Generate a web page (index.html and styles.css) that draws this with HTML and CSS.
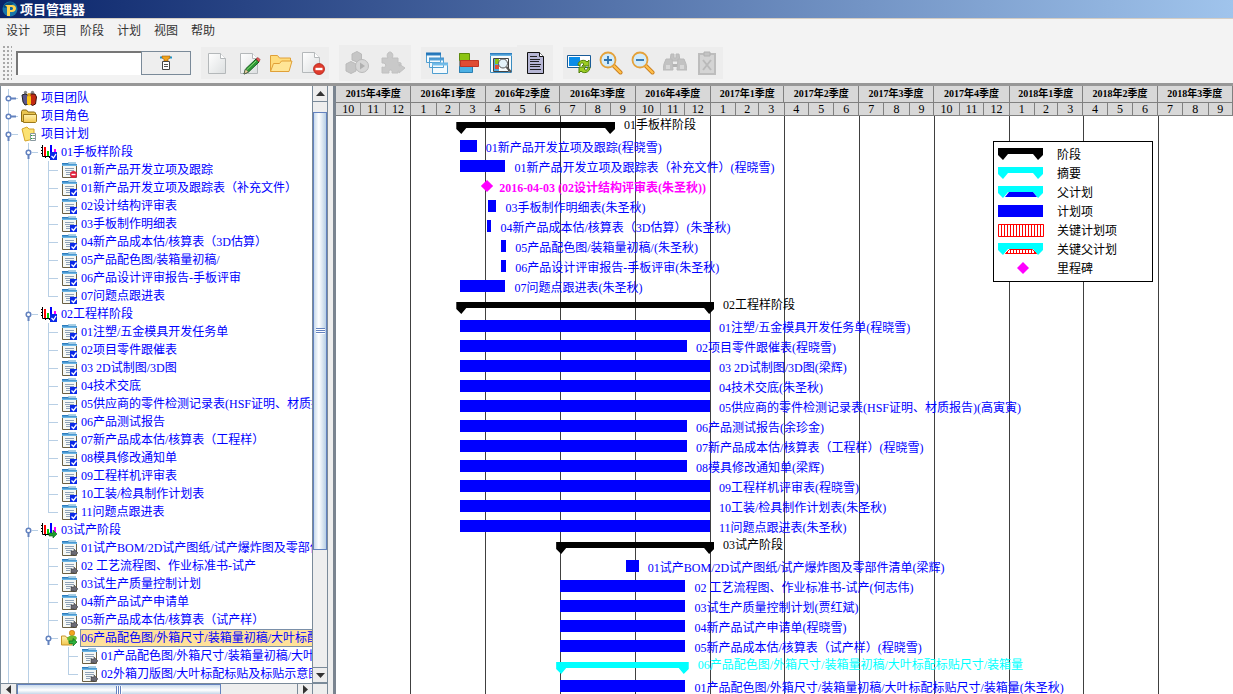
FILE: index.html
```html
<!DOCTYPE html>
<html lang="zh-CN">
<head>
<meta charset="utf-8">
<title>项目管理器</title>
<link rel="stylesheet" href="styles.css">
</head>
<body>
<svg class="defs" aria-hidden="true">
  <defs>
    <linearGradient id="pageFill" x1="0" y1="0" x2="1" y2="1"><stop offset="0" stop-color="#fff"/><stop offset="1" stop-color="#dcdfe0"/></linearGradient>
    <linearGradient id="folderFill" x1="0" y1="0" x2="0" y2="1"><stop offset="0" stop-color="#fff3b0"/><stop offset="1" stop-color="#f2c64e"/></linearGradient>
    <linearGradient id="blueFill" x1="0" y1="0" x2="0" y2="1"><stop offset="0" stop-color="#1c6fb5"/><stop offset="1" stop-color="#7cc4ee"/></linearGradient>
    <pattern id="stripes" width="3" height="12" patternUnits="userSpaceOnUse"><rect width="3" height="12" fill="#fff"/><rect width="1" height="12" fill="#f00"/></pattern>
  </defs>
  <symbol id="closed" viewBox="0 0 20 18"><path d="M11 9.500h5" stroke="#6382bf" stroke-width="2"/><path d="M16 9.500h2" stroke="#b8cfe5"/><circle cx="8.500" cy="9.500" r="2.300" fill="#fff" stroke="#6382bf" stroke-width="1.500"/></symbol>
  <symbol id="opened" viewBox="0 0 20 18"><path d="M12 9.500h6" stroke="#b8cfe5"/><path d="M8.500 12v4" stroke="#6382bf" stroke-width="2"/><circle cx="8.500" cy="9.500" r="2.300" fill="#fff" stroke="#6382bf" stroke-width="1.500"/></symbol>
  <symbol id="doc" viewBox="0 0 16 16"><path d="M.5 2.500h14v13H.5z" fill="#f6f8f4" stroke="#6a5f42"/><path d="M0 1h6l1 1h8v2H0z" fill="url(#blueFill)"/><path d="M6 1h8" stroke="#4d9ccb"/><path d="M3 6.500h9M3 8.500h9M4 10.500h6M4 12.500h4" stroke="#8fa3b8"/></symbol>
  <symbol id="doc-check" viewBox="0 0 16 16"><use href="#doc" width="16" height="16"/><path d="M8 9h7v7H8z" fill="#0a28e8"/><path d="M9.500 12.500l2 2 3-4" fill="none" stroke="#fff" stroke-width="1.300"/></symbol>
  <symbol id="doc-stop" viewBox="0 0 16 16"><use href="#doc" width="16" height="16"/><circle cx="11.500" cy="12.500" r="3.500" fill="#e0223c"/><path d="M9.500 12.500h4" stroke="#fff" stroke-width="1.400"/></symbol>
  <symbol id="doc-wait" viewBox="0 0 16 16"><use href="#doc" width="16" height="16"/><path d="M9 11h3V9l4 4-4 3v-1H9z" fill="#6a6a74" stroke="#333" stroke-width=".5"/></symbol>
  <symbol id="phase" viewBox="0 0 16 16"><path d="M1.500 1v11.500H13M0 3.500h1M0 6.500h1M0 9.500h1M4.500 12v2M8.500 12v2" fill="none" stroke="#000"/><path d="M3 3h2v9H3z" fill="#f00"/><path d="M6 7h2v5H6z" fill="#0c0"/><path d="M9 1h2v11H9z" fill="#00f"/><path d="M13 5h2v6h-2z" fill="#f0f"/></symbol>
  <symbol id="phase-done" viewBox="0 0 16 16"><use href="#phase" width="16" height="16"/><path d="M9 8h7v8H9z" fill="#0a28e8"/><path d="M10.500 12l2 2 2.500-4" fill="none" stroke="#fff" stroke-width="1.300"/></symbol>
  <symbol id="phase-run" viewBox="0 0 16 16"><use href="#phase" width="16" height="16"/><path d="M8 11h4V8l4 4-4 4v-2H8z" fill="#1a9c2c" stroke="#0b5c18" stroke-width=".6"/></symbol>
  <symbol id="team" viewBox="0 0 16 16"><circle cx="4.500" cy="2.500" r="1.700" fill="#888"/><circle cx="11.500" cy="2.500" r="1.700" fill="#888"/><path d="M1 5l3-1 3 1 1 3v6l-4 1-2-3z" fill="#5a5488" stroke="#222"/><path d="M9 4h5l1.500 3-1 7-3 1.500L8 13z" fill="#c22a12" stroke="#401008"/><path d="M6 7c0-2 4-2 4 0v7l-2 1.500L6 14z" fill="#ffc414"/><circle cx="8" cy="4.800" r="1.800" fill="#d8a020"/></symbol>
  <symbol id="folder" viewBox="0 0 16 16"><path d="M.5 13.500v-10l1-1.500h4l1.500 2h6.500l1 1v8.500z" fill="#e9c54f" stroke="#8c6d14"/><path d="M2.500 6.500h13v7l-1 1h-12z" fill="url(#folderFill)" stroke="#9c7a1c"/></symbol>
  <symbol id="plans" viewBox="0 0 16 16"><path d="M1 3l5-2 2 2h5v10l-9 2z" fill="#fbe272" stroke="#d5a52a"/><path d="M9.500 7.500h5v7h-5z" fill="#fff" stroke="#8899a0"/><path d="M10 9.500h1.500M10 12.500h1.500" stroke="#1a9c2c"/><path d="M12 9.500h2M12 12.500h2" stroke="#888"/></symbol>
  <symbol id="parent" viewBox="0 0 16 16"><path d="M.5 6h4l1 1.500H11V15H.5z" fill="url(#folderFill)" stroke="#c8952a"/><circle cx="11" cy="3" r="2.700" fill="#f2a41c" stroke="#b86a0c" stroke-width=".6"/><path d="M6 9c0-4 9-5 10-1l-2 4H8z" fill="#6dbb30"/><path d="M8 11h4V8.500l4 3.500-4 4v-2.500H8z" fill="#2fb13c" stroke="#0d6b1b" stroke-width=".7"/></symbol>
  <symbol id="page" viewBox="0 0 24 24"><path d="M3.500 2.500h12l5 5v15h-17z" fill="url(#pageFill)" stroke="#b4b8ba"/><path d="M15.500 2.500v5h5" fill="#fff" stroke="#b4b8ba"/></symbol>
</svg>

<header class="titlebar">
  <svg class="logo" viewBox="0 0 16 16" aria-hidden="true"><circle cx="8" cy="8" r="7.500" fill="#1976a8"/><path d="M1 6C3 2 8 0 12 2l-4 3-5 2z" fill="#0a4c7c"/><path d="M3 4h7c6 0 5 8-1 7H8v4H5V6z" fill="#ffd34e"/><path d="M8 6h1.500c2 0 2 3 0 3H8z" fill="#14679b"/></svg>
  <h1>项目管理器</h1>
</header>

<nav class="menubar">
  <button>设计</button><button>项目</button><button>阶段</button><button>计划</button><button>视图</button><button>帮助</button>
</nav>

<div class="toolbar">
  <span class="grip"></span>
  <div class="search">
    <input type="text" aria-label="搜索">
    <button aria-label="过滤"><svg width="16" height="16" viewBox="0 0 16 16"><path d="M2 2.500h3M11 2.500h3" stroke="#1a9ad8" stroke-width="2"/><path d="M4 1h8v2l-2 1v2H6V4L4 3z" fill="#f0a21c" stroke="#9c5c08" stroke-width=".6"/><path d="M4.500 6.500h7v8h-7z" fill="#fff" stroke="#444"/><path d="M6 9.500h4M6 11.500h4" stroke="#555"/></svg></button>
  </div>
  <div class="group">
    <button aria-label="新建"><svg><use href="#page"/></svg></button>
    <button aria-label="编辑"><svg viewBox="0 0 24 24"><use href="#page"/><path d="M7 23l1.500-5L19 8l3 3-10.500 10z" fill="#2e9a35" stroke="#125a1c"/><path d="M19 8l2-1.500 2 2L22 11z" fill="#e55a5a" stroke="#8c2424" stroke-width=".6"/><path d="M9.500 19L19 10" stroke="#8fdc78"/><path d="M7 23l1.500-5 3 3z" fill="#f0d8a0" stroke="#444" stroke-width=".6"/></svg></button>
    <button aria-label="打开"><svg viewBox="0 0 24 24"><path d="M1.500 20.500v-16h7l2 2.500h11v4" fill="#ffdc7c" stroke="#e0a038"/><path d="M1.500 20.500l3-8h6l2-2.500h10.500l-3 10.500z" fill="#ffe596" stroke="#e0a038"/></svg></button>
    <button aria-label="删除"><svg viewBox="0 0 24 24"><path d="M1.500 1.500h12l5 5v15h-17z" fill="url(#pageFill)" stroke="#b4b8ba"/><path d="M13.500 1.500v5h5" fill="#fff" stroke="#b4b8ba"/><circle cx="18" cy="18" r="5.500" fill="#e03c2c" stroke="#b02018" stroke-width=".8"/><path d="M14.500 18h7" stroke="#fff" stroke-width="2.400"/></svg></button>
  </div>
  <div class="group wide">
    <button aria-label="启动" disabled><svg viewBox="0 0 24 24"><g fill="#c6c6c6" stroke="#bababa"><path d="M7 3l5-2.500L16.500 3v6L12 11 7 9z"/><path d="M1 13l5-2.500L11 13v7l-5 2.500L1 20z"/><circle cx="17" cy="15" r="6.500" fill="#d6d6d6"/></g><path d="M15 11.500v7l5-3.500z" fill="#b0b0b0"/></svg></button>
    <button aria-label="插件" disabled><svg viewBox="0 0 24 24"><path d="M1 7h6c-2-3 0-6 2-6s4 3 2 6h6v5c4-2 4 3 1 3v-2l6 4-6 5v-2h-1v2h-6c1-4-4-4-3 0H1v-6c5 2 5-5 0-4z" fill="#c9c9c9" stroke="#c0c0c0"/></svg></button>
  </div>
  <div class="group">
    <button aria-label="层叠窗口"><svg viewBox="0 0 24 24"><g fill="#f4fafd" stroke="#4f9ed0"><path d="M1.500 2.500h14v9h-14zM4.500 7.500h14v9h-14zM7.500 12.500h15v10h-15z"/></g><path d="M1 1.500h15v3H1zM4 6.500h15v3H4zM7 11.500h16v3H7z" fill="url(#blueFill)"/></svg></button>
    <button aria-label="甘特图"><svg viewBox="0 0 24 24"><path d="M2.500 2v20" stroke="#888"/><path d="M2.500 2.500h10v7h-10z" fill="#8cc412" stroke="#5e8a0a"/><path d="M2.500 15.500h13v6h-13z" fill="#4cb0e4" stroke="#2a80b4"/><path d="M3.500 9.500h18v6h-18z" fill="#e04c34" stroke="#c03424"/></svg></button>
    <button aria-label="预览"><svg viewBox="0 0 24 24"><path d="M1.500 2.500h21v19h-21z" fill="#f7fbfd" stroke="#3a8cc0"/><path d="M1 2h22v3H1z" fill="url(#blueFill)"/><path d="M5 7h5v14H5z" fill="#52a8dc"/><path d="M6 8h4v5H6z" fill="#8cc412"/><path d="M6 14h4v4H6z" fill="#e04c34"/><path d="M4.500 7.500h15v13h-15z" fill="none" stroke="#444"/><circle cx="14" cy="12.500" r="4.500" fill="#e4f2fa" stroke="#555"/><path d="M17.500 16l4.500 5" stroke="#555" stroke-width="2"/></svg></button>
    <button class="report" aria-label="报表"><svg viewBox="0 0 24 24"><path d="M4.500 1.500h12l4 4v17h-16z" fill="#b6b6d4" stroke="#111"/><path d="M16.500 1.500v4h4" fill="#fff" stroke="#111"/><path d="M7 5.500h7M7 8.500h10M7 10.500h9M7 13.500h11M7 15.500h10M7 18.500h11" stroke="#222"/></svg></button>
  </div>
  <div class="group">
    <button aria-label="刷新"><svg viewBox="0 0 24 24"><path d="M.5 4.500h23v12H.5z" fill="#fff" stroke="#1a5c98"/><path d="M2 6h11v9H2z" fill="#0a8ce8"/><path d="M11 14c0-5 7-6 9-3l2-2v6h-7l2-2c-2-2-4-1-4 2z" fill="#9ccc24" stroke="#4c7c08"/><path d="M23 16c0 6-7 7-9 4l-2 2v-6h7l-2 2c2 2 4 1 4-2z" fill="#9ccc24" stroke="#4c7c08"/></svg></button>
    <button aria-label="放大"><svg viewBox="0 0 24 24"><path d="M14 14l7.500 7.500" stroke="#c87c1c" stroke-width="4" stroke-linecap="round"/><path d="M14.500 14.500l7 7" stroke="#ffc04c" stroke-width="2.400" stroke-linecap="round"/><circle cx="9" cy="9" r="7.500" fill="#d2ecfc" stroke="#e4a23c" stroke-width="1.800"/><path d="M9 5v8M5 9h8" stroke="#2a70ac" stroke-width="1.800"/></svg></button>
    <button aria-label="缩小"><svg viewBox="0 0 24 24"><path d="M14 14l7.500 7.500" stroke="#c87c1c" stroke-width="4" stroke-linecap="round"/><path d="M14.500 14.500l7 7" stroke="#ffc04c" stroke-width="2.400" stroke-linecap="round"/><circle cx="9" cy="9" r="7.500" fill="#d2ecfc" stroke="#e4a23c" stroke-width="1.800"/><path d="M5 9h8" stroke="#2a70ac" stroke-width="1.800"/></svg></button>
    <button aria-label="查找" disabled><svg viewBox="0 0 24 24"><g fill="#c2c2c2" stroke="#bababa"><path d="M8 3h3v4h2V3h3l1 7H7z"/><path d="M3 8h6l1 11H0l1-6zM15 8h6l2 5 1 6H14z"/></g><path d="M10 13h4v3h-4z" fill="#b4b4b4"/><path d="M3 14h4v4H3zM17 14h4v4h-4z" fill="#d8d8d8"/></svg></button>
    <button aria-label="粘贴" disabled><svg viewBox="0 0 24 24"><path d="M4 3h16v20H4z" fill="#d4d4d4" stroke="#bdbdbd" stroke-width="2"/><path d="M9 1h6v4H9z" fill="#c4c4c4" stroke="#b2b2b2"/><path d="M8 9l8 10M16 9L8 19" stroke="#bababa" stroke-width="2"/></svg></button>
  </div>
</div>

<main class="workspace">
  <section class="side">
    <div class="pane">
      <ul class="tree">
        <li><div class="row"><button class="handle" aria-label="展开"><svg><use href="#closed"/></svg></button><svg class="ico"><use href="#team"/></svg><span>项目团队</span></div></li>
        <li><div class="row"><button class="handle" aria-label="展开"><svg><use href="#closed"/></svg></button><svg class="ico"><use href="#folder"/></svg><span>项目角色</span></div></li>
        <li><div class="row"><button class="handle" aria-label="折叠"><svg><use href="#opened"/></svg></button><svg class="ico"><use href="#plans"/></svg><span>项目计划</span></div>
          <ul>
            <li><div class="row"><button class="handle" aria-label="折叠"><svg><use href="#opened"/></svg></button><svg class="ico"><use href="#phase-done"/></svg><span>01手板样阶段</span></div>
              <ul class="leaves">
                <li><div class="row"><svg class="ico"><use href="#doc-stop"/></svg><span>01新产品开发立项及跟踪</span></div></li>
                <li><div class="row"><svg class="ico"><use href="#doc-check"/></svg><span>01新产品开发立项及跟踪表（补充文件）</span></div></li>
                <li><div class="row"><svg class="ico"><use href="#doc-check"/></svg><span>02设计结构评审表</span></div></li>
                <li><div class="row"><svg class="ico"><use href="#doc-check"/></svg><span>03手板制作明细表</span></div></li>
                <li><div class="row"><svg class="ico"><use href="#doc-check"/></svg><span>04新产品成本估/核算表（3D估算）</span></div></li>
                <li><div class="row"><svg class="ico"><use href="#doc-check"/></svg><span>05产品配色图/装箱量初稿/</span></div></li>
                <li><div class="row"><svg class="ico"><use href="#doc-check"/></svg><span>06产品设计评审报告-手板评审</span></div></li>
                <li><div class="row"><svg class="ico"><use href="#doc-check"/></svg><span>07问题点跟进表</span></div></li>
              </ul>
            </li>
            <li><div class="row"><button class="handle" aria-label="折叠"><svg><use href="#opened"/></svg></button><svg class="ico"><use href="#phase-done"/></svg><span>02工程样阶段</span></div>
              <ul class="leaves">
                <li><div class="row"><svg class="ico"><use href="#doc-check"/></svg><span>01注塑/五金模具开发任务单</span></div></li>
                <li><div class="row"><svg class="ico"><use href="#doc-check"/></svg><span>02项目零件跟催表</span></div></li>
                <li><div class="row"><svg class="ico"><use href="#doc-check"/></svg><span>03 2D试制图/3D图</span></div></li>
                <li><div class="row"><svg class="ico"><use href="#doc-check"/></svg><span>04技术交底</span></div></li>
                <li><div class="row"><svg class="ico"><use href="#doc-check"/></svg><span>05供应商的零件检测记录表(HSF证明、材质报告)</span></div></li>
                <li><div class="row"><svg class="ico"><use href="#doc-check"/></svg><span>06产品测试报告</span></div></li>
                <li><div class="row"><svg class="ico"><use href="#doc-check"/></svg><span>07新产品成本估/核算表（工程样）</span></div></li>
                <li><div class="row"><svg class="ico"><use href="#doc-check"/></svg><span>08模具修改通知单</span></div></li>
                <li><div class="row"><svg class="ico"><use href="#doc-check"/></svg><span>09工程样机评审表</span></div></li>
                <li><div class="row"><svg class="ico"><use href="#doc-check"/></svg><span>10工装/检具制作计划表</span></div></li>
                <li><div class="row"><svg class="ico"><use href="#doc-check"/></svg><span>11问题点跟进表</span></div></li>
              </ul>
            </li>
            <li><div class="row"><button class="handle" aria-label="折叠"><svg><use href="#opened"/></svg></button><svg class="ico"><use href="#phase-run"/></svg><span>03试产阶段</span></div>
              <ul class="leaves">
                <li><div class="row"><svg class="ico"><use href="#doc-wait"/></svg><span>01试产BOM/2D试产图纸/试产爆炸图及零部件清单</span></div></li>
                <li><div class="row"><svg class="ico"><use href="#doc-wait"/></svg><span>02 工艺流程图、作业标准书-试产</span></div></li>
                <li><div class="row"><svg class="ico"><use href="#doc-wait"/></svg><span>03试生产质量控制计划</span></div></li>
                <li><div class="row"><svg class="ico"><use href="#doc-wait"/></svg><span>04新产品试产申请单</span></div></li>
                <li><div class="row"><svg class="ico"><use href="#doc-wait"/></svg><span>05新产品成本估/核算表（试产样）</span></div></li>
                <li class="branch"><div class="row selected"><button class="handle" aria-label="折叠"><svg><use href="#opened"/></svg></button><svg class="ico"><use href="#parent"/></svg><span>06产品配色图/外箱尺寸/装箱量初稿/大叶标配标贴尺寸/装箱量</span></div>
                  <ul class="leaves">
                    <li><div class="row"><svg class="ico"><use href="#doc-wait"/></svg><span>01产品配色图/外箱尺寸/装箱量初稿/大叶标配标贴尺寸/装箱量</span></div></li>
                    <li><div class="row"><svg class="ico"><use href="#doc-wait"/></svg><span>02外箱刀版图/大叶标配标贴及标贴示意图</span></div></li>
                  </ul>
                </li>
              </ul>
            </li>
          </ul>
        </li>
      </ul>
      <div class="vscroll">
        <button aria-label="向上"><svg viewBox="0 0 9 5"><path d="M0 5L4.500 0 9 5z" fill="#333"/></svg></button>
        <div class="track"><div class="thumb"></div></div>
        <button aria-label="向下"><svg viewBox="0 0 9 5"><path d="M0 0l4.500 5L9 0z" fill="#333"/></svg></button>
      </div>
    </div>
    <div class="hscroll">
      <button aria-label="向左"><svg viewBox="0 0 5 9"><path d="M5 0L0 4.500 5 9z" fill="#333"/></svg></button>
      <div class="track"><div class="thumb"></div></div>
      <button aria-label="向右"><svg viewBox="0 0 5 9"><path d="M0 0l5 4.500L0 9z" fill="#333"/></svg></button>
    </div>
  </section>
  <div class="splitter"></div>
  <section class="gantt">
    <div class="scale quarters">
      <b style="--d:92">2015年4季度</b><b style="--d:91">2016年1季度</b><b style="--d:91">2016年2季度</b><b style="--d:92">2016年3季度</b><b style="--d:92">2016年4季度</b><b style="--d:90">2017年1季度</b><b style="--d:91">2017年2季度</b><b style="--d:92">2017年3季度</b><b style="--d:92">2017年4季度</b><b style="--d:90">2018年1季度</b><b style="--d:91">2018年2季度</b><b style="--d:92">2018年3季度</b>
    </div>
    <div class="scale months">
      <span style="--d:31">10</span><span style="--d:30">11</span><span style="--d:31">12</span><span style="--d:31">1</span><span style="--d:29">2</span><span style="--d:31">3</span><span style="--d:30">4</span><span style="--d:31">5</span><span style="--d:30">6</span><span style="--d:31">7</span><span style="--d:31">8</span><span style="--d:30">9</span><span style="--d:31">10</span><span style="--d:30">11</span><span style="--d:31">12</span><span style="--d:31">1</span><span style="--d:28">2</span><span style="--d:31">3</span><span style="--d:30">4</span><span style="--d:31">5</span><span style="--d:30">6</span><span style="--d:31">7</span><span style="--d:31">8</span><span style="--d:30">9</span><span style="--d:31">10</span><span style="--d:30">11</span><span style="--d:31">12</span><span style="--d:31">1</span><span style="--d:28">2</span><span style="--d:31">3</span><span style="--d:30">4</span><span style="--d:31">5</span><span style="--d:30">6</span><span style="--d:31">7</span><span style="--d:31">8</span><span style="--d:30">9</span>
    </div>
    <div class="chart">
      <div class="grid"><i style="--d:92"></i><i style="--d:91"></i><i style="--d:91"></i><i style="--d:92"></i><i style="--d:92"></i><i style="--d:90"></i><i style="--d:91"></i><i style="--d:92"></i><i style="--d:92"></i><i style="--d:90"></i><i style="--d:91"></i><i style="--d:92"></i></div>
      <div class="bars">
        <div class="task stage" style="--s:147;--d:194"><i></i><span>01手板样阶段</span></div>
        <div class="task" style="--s:152;--d:20"><i></i><span>01新产品开发立项及跟踪(程晓雪)</span></div>
        <div class="task" style="--s:152;--d:55"><i></i><span>01新产品开发立项及跟踪表（补充文件）(程晓雪)</span></div>
        <div class="task milestone" style="--s:177;--d:15"><i></i><span>2016-04-03 (02设计结构评审表(朱圣秋))</span></div>
        <div class="task" style="--s:186;--d:10"><i></i><span>03手板制作明细表(朱圣秋)</span></div>
        <div class="task" style="--s:184;--d:6"><i></i><span>04新产品成本估/核算表（3D估算）(朱圣秋)</span></div>
        <div class="task" style="--s:202;--d:6"><i></i><span>05产品配色图/装箱量初稿/(朱圣秋)</span></div>
        <div class="task" style="--s:202;--d:6"><i></i><span>06产品设计评审报告-手板评审(朱圣秋)</span></div>
        <div class="task" style="--s:152;--d:55"><i></i><span>07问题点跟进表(朱圣秋)</span></div>
        <div class="task stage" style="--s:147;--d:315"><i></i><span>02工程样阶段</span></div>
        <div class="task" style="--s:152;--d:305"><i></i><span>01注塑/五金模具开发任务单(程晓雪)</span></div>
        <div class="task" style="--s:152;--d:277"><i></i><span>02项目零件跟催表(程晓雪)</span></div>
        <div class="task" style="--s:152;--d:305"><i></i><span>03 2D试制图/3D图(梁辉)</span></div>
        <div class="task" style="--s:152;--d:305"><i></i><span>04技术交底(朱圣秋)</span></div>
        <div class="task" style="--s:152;--d:305"><i></i><span>05供应商的零件检测记录表(HSF证明、材质报告)(高寅寅)</span></div>
        <div class="task" style="--s:152;--d:277"><i></i><span>06产品测试报告(余珍金)</span></div>
        <div class="task" style="--s:152;--d:277"><i></i><span>07新产品成本估/核算表（工程样）(程晓雪)</span></div>
        <div class="task" style="--s:152;--d:277"><i></i><span>08模具修改通知单(梁辉)</span></div>
        <div class="task" style="--s:152;--d:305"><i></i><span>09工程样机评审表(程晓雪)</span></div>
        <div class="task" style="--s:152;--d:305"><i></i><span>10工装/检具制作计划表(朱圣秋)</span></div>
        <div class="task" style="--s:152;--d:305"><i></i><span>11问题点跟进表(朱圣秋)</span></div>
        <div class="task stage" style="--s:269;--d:193"><i></i><span>03试产阶段</span></div>
        <div class="task" style="--s:354;--d:16"><i></i><span>01试产BOM/2D试产图纸/试产爆炸图及零部件清单(梁辉)</span></div>
        <div class="task" style="--s:274;--d:153"><i></i><span>02 工艺流程图、作业标准书-试产(何志伟)</span></div>
        <div class="task" style="--s:274;--d:153"><i></i><span>03试生产质量控制计划(贾红斌)</span></div>
        <div class="task" style="--s:274;--d:153"><i></i><span>04新产品试产申请单(程晓雪)</span></div>
        <div class="task" style="--s:274;--d:153"><i></i><span>05新产品成本估/核算表（试产样）(程晓雪)</span></div>
        <div class="task stage summary" style="--s:269;--d:162"><i></i><span>06产品配色图/外箱尺寸/装箱量初稿/大叶标配标贴尺寸/装箱量</span></div>
        <div class="task" style="--s:274;--d:153"><i></i><span>01产品配色图/外箱尺寸/装箱量初稿/大叶标配标贴尺寸/装箱量(朱圣秋)</span></div>
      </div>
      <ul class="legend">
        <li><svg viewBox="0 0 46 13"><path d="M0 0h45v7l-5 5-5-6H10l-5 6-5-5z" fill="#000"/></svg>阶段</li>
        <li><svg viewBox="0 0 46 13"><path d="M0 0h45v7l-5 5-5-6H10l-5 6-5-5z" fill="#0ff"/></svg>摘要</li>
        <li><svg viewBox="0 0 46 13"><path d="M0 0h45v7l-5 5-5-6H10l-5 6-5-5z" fill="#0ff"/><path d="M11 6h24l4 5H7z" fill="#00f"/></svg>父计划</li>
        <li><svg viewBox="0 0 46 13"><path d="M0 0h45v12H0z" fill="#00f"/></svg>计划项</li>
        <li><svg viewBox="0 0 46 13"><path d="M.5.5h45v12H.5z" fill="url(#stripes)" stroke="#f00"/></svg>关键计划项</li>
        <li><svg viewBox="0 0 46 13"><path d="M0 0h45v7l-5 5-5-6H10l-5 6-5-5z" fill="#0ff"/><path d="M11.500 6.500h23l4 4h-31z" fill="url(#stripes)" stroke="#f00"/></svg>关键父计划</li>
        <li><svg viewBox="0 0 46 13"><path d="M25 0l6 6-6 6-6-6z" fill="#f0f"/></svg>里程碑</li>
      </ul>
    </div>
  </section>
</main>
</body>
</html>
```
FILE: styles.css
```css
* { box-sizing: border-box; }
body {
  margin: 0;
  height: 100vh;
  display: flex;
  flex-direction: column;
  overflow: hidden;
  background: #f3f3f3;
  font: 12px/18px "Liberation Serif", "Noto Sans CJK SC", serif;
  color: #000;
}
ul { margin: 0; padding: 0; list-style: none; }
button { margin: 0; padding: 0; border: 0; background: none; font: inherit; color: inherit; }
svg { display: block; flex: none; }
.defs { position: absolute; width: 0; height: 0; }

.titlebar {
  display: flex;
  align-items: center;
  gap: 2px;
  height: 19px;
  flex: none;
  padding-left: 2px;
  border-bottom: 1px solid #d4cdc4;
  background: linear-gradient(90deg, #0a246a, #a0c4ec);
}
.logo { width: 16px; height: 16px; }
.titlebar h1 { margin: 0; font: bold 13px/16px "Noto Sans CJK SC", sans-serif; color: #fff; }

.menubar { display: flex; gap: 13px; height: 24px; flex: none; padding-left: 6px; }
.menubar button { font: 12px/22px "Noto Sans CJK SC", sans-serif; height: 22px; color: #333; }

.toolbar {
  display: flex;
  align-items: center;
  gap: 10px;
  height: 43px;
  flex: none;
  padding: 0 2px;
  border-bottom: 3px solid #979797;
}
.grip {
  width: 10px;
  height: 36px;
  background-image: radial-gradient(#a8a8a8 1px, transparent 1px);
  background-size: 4px 4px;
}
.search { display: flex; margin-left: -6px; }
.search input {
  width: 125px;
  height: 24px;
  border: 0;
  border-top: 2px solid #777;
  border-left: 2px solid #777;
  background: #fff;
  font: inherit;
}
.search button {
  display: grid;
  place-items: center;
  width: 50px;
  height: 24px;
  border: 1px solid #7a8a99;
  background: #eee;
}
.group { display: flex; align-items: center; height: 32px; background: #ededed; }
.group button { display: grid; place-items: center; width: 32px; height: 32px; }
.group svg { width: 24px; height: 24px; }
.group.wide { height: 36px; }
.group.wide button, .group .report { width: 36px; height: 36px; background: #ededed; }

.workspace { display: flex; flex: 1; min-height: 0; }
.side {
  display: flex;
  flex-direction: column;
  flex: none;
  width: 328px;
  border: solid #7a8a99;
  border-width: 0 1px;
  background: #fff;
}
.pane { display: flex; flex: 1; min-height: 0; }
.tree { flex: 1; min-width: 0; padding-top: 3px; overflow: hidden; color: #00f; white-space: nowrap; }
.tree ul { padding-left: 20px; }
.tree li { background: linear-gradient(#b8cfe5, #b8cfe5) 7px 0 / 1px 100% no-repeat; }
.leaves > li {
  padding-left: 20px;
  background-image: linear-gradient(#b8cfe5, #b8cfe5), linear-gradient(#b8cfe5, #b8cfe5);
  background-position: 7px 0, 7px 9px;
  background-size: 1px 100%, 10px 1px;
}
.tree .leaves > li:last-child { background-size: 1px 10px, 10px 1px; }
.leaves > .branch { padding-left: 0; }
.row { display: flex; align-items: center; height: 18px; }
.handle { width: 20px; height: 18px; margin-left: -1px; }
.handle svg { width: 20px; height: 18px; }
.ico { width: 16px; height: 16px; margin: 0 3px 0 1px; }
.handle + .ico { margin-right: 4px; }
.selected .handle + .ico { margin-right: 3px; }
.row span { height: 18px; line-height: 18px; }
.selected span { border: 1px solid #7a8fa8; background: #ffe19a; line-height: 16px; flex: 1; }

.vscroll { display: flex; flex-direction: column; width: 15px; flex: none; border-left: 1px solid #7a8a99; }
.vscroll button { display: grid; place-items: center; height: 16px; border-bottom: 1px solid #7a8a99; background: #eee; }
.vscroll button:last-child { border-top: 1px solid #7a8a99; }
.vscroll svg { width: 9px; height: 5px; }
.track { flex: 1; background: #eee; }
.vscroll .track { padding-top: 10px; }
.thumb { display: grid; place-items: center; border: 1px solid #6382bf; }
.thumb::after { content: ""; }
.vscroll .thumb { height: 79%; background: linear-gradient(90deg, #c8daec, #fff 40%, #b8cfe5); }
.vscroll .thumb::after { width: 9px; height: 6px; background: repeating-linear-gradient(#6382bf 0 1px, #fff 1px 2px); }
.hscroll { display: flex; height: 11px; flex: none; border-top: 1px solid #7a8a99; padding-right: 14px; background: #eee; overflow: hidden; }
.hscroll button { display: grid; place-items: center; width: 16px; border-right: 1px solid #7a8a99; }
.hscroll button:last-child { border-left: 1px solid #7a8a99; }
.hscroll svg { width: 5px; height: 9px; }
.hscroll .thumb { width: 73%; height: 12px; background: linear-gradient(#c8daec, #fff 50%, #b8cfe5); }
.hscroll .thumb::after { width: 6px; height: 9px; background: repeating-linear-gradient(90deg, #6382bf 0 1px, #fff 1px 2px); }

.splitter { flex: none; width: 5px; background: #eee; }
.gantt { display: flex; flex-direction: column; flex: 1; min-width: 0; border-left: 3px solid #7a8490; background: #fff; }
.scale { display: flex; flex: none; background: #d8d8d8; text-align: center; }
.scale > * { flex: var(--d) 0 0; min-width: 0; border: solid #808080; border-width: 0 1px 1px 0; }
.quarters > * { font-size: 10px; line-height: 16px; white-space: nowrap; }
.months > * { line-height: 12px; }
.chart { position: relative; flex: 1; min-height: 0; overflow: hidden; }
.grid { position: absolute; inset: 0; display: flex; }
.grid i { flex: var(--d) 0 0; border-right: 1px solid #404040; }
.grid i:last-child { border-right: 0; }
.bars { position: relative; padding-top: 4px; container-type: inline-size; }
.task {
  display: flex;
  gap: 9px;
  height: 20px;
  padding-left: calc(var(--s) * 100cqw / 1096);
  color: #00f;
  white-space: nowrap;
}
.task i { flex: none; width: calc(var(--d) * 100cqw / 1096); height: 12px; background: currentColor; }
.task span { line-height: 16px; }
.task.stage { color: #000; }
.stage i {
  margin-top: 2px;
  clip-path: polygon(0 0, 100% 0, 100% 7px, calc(100% - 5px) 12px, calc(100% - 10px) 6px, 10px 6px, 5px 12px, 0 7px);
}
.stage span { line-height: 10px; }
.task.summary { color: #0ff; }
.task.milestone { gap: 6px; color: #f0f; font-weight: bold; }
.milestone i { clip-path: polygon(50% 0, 100% 50%, 50% 100%, 0 50%); }

.legend {
  position: absolute;
  top: 25px;
  right: 80px;
  width: 160px;
  padding: 6px 4px 0;
  border: 1px solid #000;
  background: #fff;
}
.legend li { display: flex; gap: 13px; height: 19px; line-height: 14px; }
.legend svg { width: 46px; height: 13px; }
```
